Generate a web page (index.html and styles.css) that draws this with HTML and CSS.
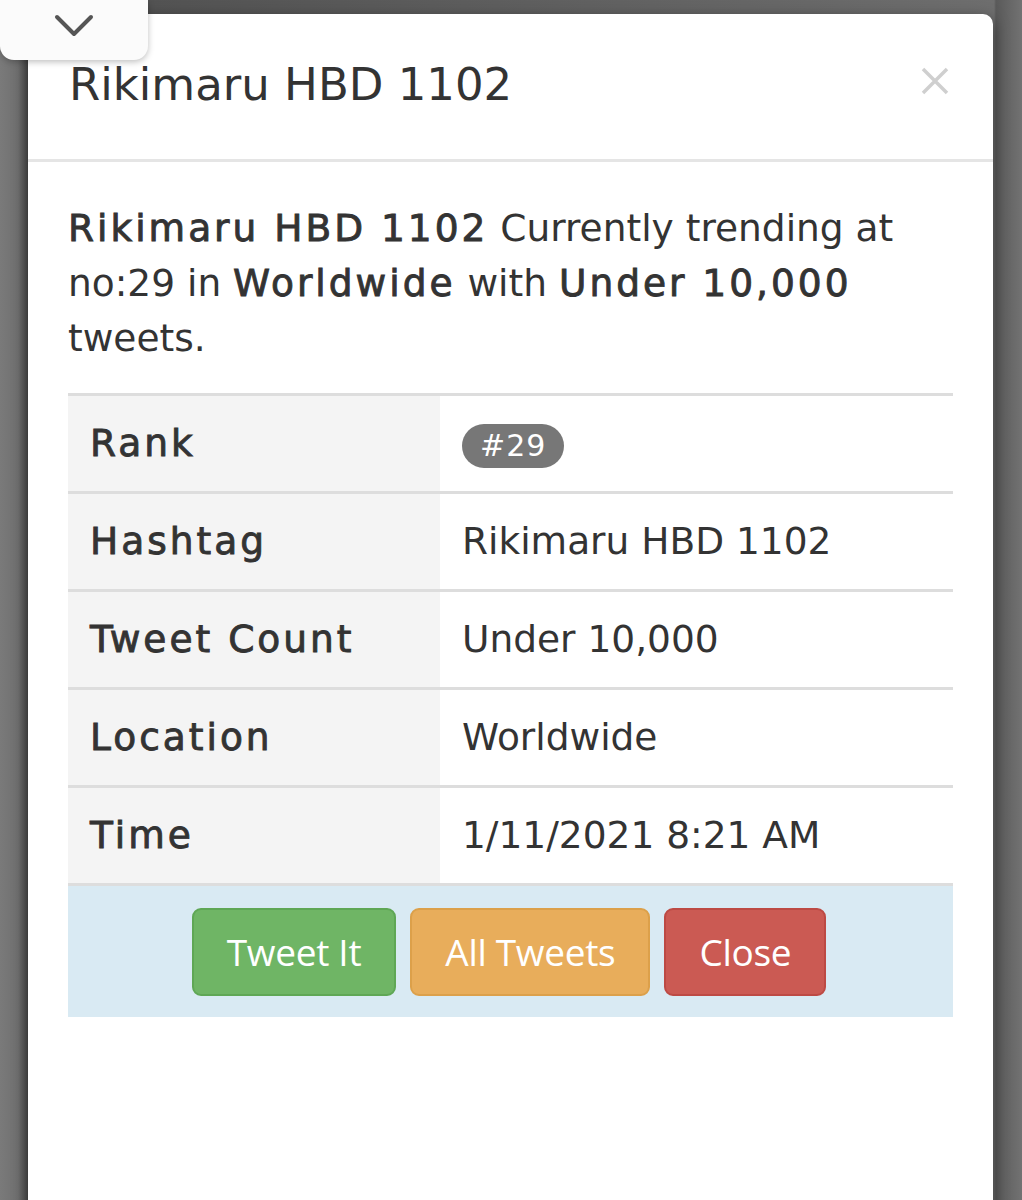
FILE: index.html
```html
<!DOCTYPE html>
<html lang="en">
<head>
<meta charset="utf-8">
<title>Rikimaru HBD 1102</title>
<link rel="stylesheet" href="styles.css">
</head>
<body>
<div class="tab">
  <svg class="chev" width="40" height="24" viewBox="0 0 40 24"><path d="M3 3 L20 20 L37 3" fill="none" stroke="#555" stroke-width="4" stroke-linecap="round" stroke-linejoin="round"/></svg>
</div>
<div class="modal">
  <div class="modal-header">
    <h4 class="modal-title">Rikimaru HBD 1102</h4>
    <span class="close"><svg width="28" height="28" viewBox="0 0 28 28"><path d="M2 2 L26 26 M26 2 L2 26" stroke="#cfcfcf" stroke-width="3.5"/></svg></span>
  </div>
  <div class="modal-body">
    <p class="summary"><b>Rikimaru HBD 1102</b> Currently trending at no:29 in <b>Worldwide</b> with <b>Under 10,000</b> tweets.</p>
    <table class="info">
      <tr><th>Rank</th><td><span class="badge">#29</span></td></tr>
      <tr><th>Hashtag</th><td>Rikimaru HBD 1102</td></tr>
      <tr><th>Tweet Count</th><td>Under 10,000</td></tr>
      <tr><th>Location</th><td>Worldwide</td></tr>
      <tr><th>Time</th><td>1/11/2021 8:21 AM</td></tr>
      <tr class="actions"><td colspan="2">
        <div class="btns">
          <a class="btn green">Tweet It</a>
          <a class="btn orange">All Tweets</a>
          <a class="btn red">Close</a>
        </div>
      </td></tr>
    </table>
  </div>
</div>
</body>
</html>
```
FILE: styles.css
```css
html, body {
  margin: 0;
  padding: 0;
  height: 1200px;
  overflow: hidden;
}
body {
  background: linear-gradient(to right, #7a7a7a 0, #707070 18px, #4f4f4f 28px, #6e6e6e 994px, #5a5a5a 996px, #727272 1022px);
  font-family: "DejaVu Sans", "Noto Sans", sans-serif;
  color: #333;
  padding-top: 14px;
}
.tab {
  position: absolute;
  left: 0;
  top: 0;
  width: 148px;
  height: 60px;
  background: #fbfbfb;
  border-radius: 0 0 14px 14px;
  box-shadow: 0 2px 6px rgba(0,0,0,.25);
  display: flex;
  justify-content: center;
  padding-top: 14px;
  box-sizing: border-box;
  z-index: 2;
}
.modal {
  margin: 0 29px 0 28px;
  background: #fff;
  border-radius: 10px 10px 0 0;
  height: 1300px;
  box-shadow: 0 5px 15px rgba(0,0,0,.5);
}
.modal-header {
  display: flex;
  justify-content: space-between;
  align-items: flex-start;
  padding: 40px 44px 0 41px;
  height: 105px;
  border-bottom: 3px solid #e5e5e5;
}
.modal-title {
  margin: 0;
  font-weight: normal;
  font-size: 45px;
  line-height: 62px;
  color: #333;
}
.close {
  margin-top: 13px;
  line-height: 0;
}
.modal-body {
  padding: 39px 40px;
}
.summary {
  margin: 0 0 27px;
  font-size: 37.5px;
  line-height: 55px;
}
.summary b {
  font-weight: normal;
  -webkit-text-stroke: 0.9px #333;
  letter-spacing: 3px;
}
.info {
  width: 100%;
  border-collapse: collapse;
  font-size: 37.5px;
  border-top: 3px solid #ddd;
}
.info th, .info td {
  padding: 20px 22px;
  line-height: 55px;
  text-align: left;
  border-bottom: 3px solid #ddd;
}
.info th {
  width: 328px;
  background: #f4f4f4;
  font-weight: normal;
  -webkit-text-stroke: 0.9px #333;
  letter-spacing: 3px;
}
.info td {
  font-weight: normal;
}
.badge {
  display: inline-block;
  background: #777;
  color: #fff;
  font-size: 30px;
  line-height: 44px;
  padding: 0 18px;
  border-radius: 22px;
  letter-spacing: 1px;
  vertical-align: middle;
}
.actions td {
  background: #d9eaf3;
  border-bottom: none;
  padding: 22px 0 21px;
}
.btns {
  display: flex;
  justify-content: center;
  gap: 14px;
  padding-right: 3px;
}
.btn {
  display: block;
  font-family: "Open Sans", sans-serif;
  font-size: 37px;
  letter-spacing: -0.3px;
  color: #fff;
  line-height: 84px;
  padding: 0 33px;
  border-radius: 9px;
  border: 2px solid transparent;
}
.green { background: #6fb565; border-color: #5fa755; }
.orange { background: #e8ad5b; border-color: #dca04a; }
.red { background: #cb5a53; border-color: #bd4a44; }
```
